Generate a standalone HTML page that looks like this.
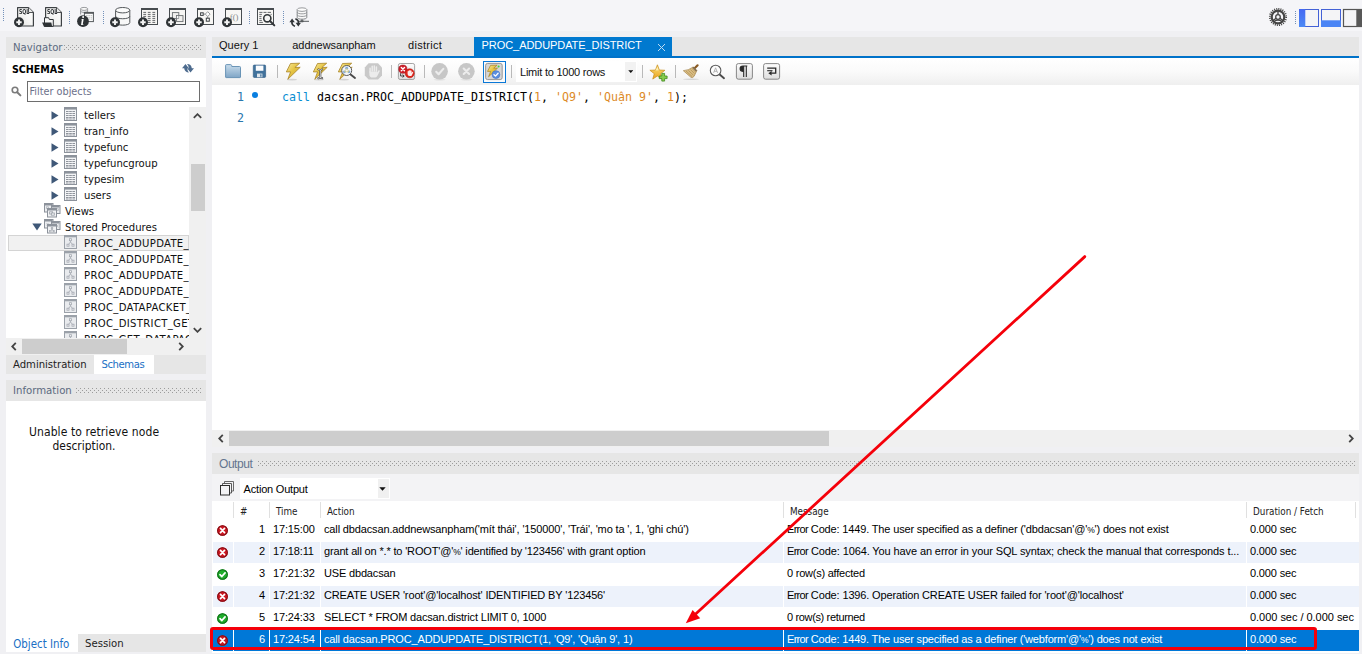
<!DOCTYPE html>
<html><head><meta charset="utf-8"><title>MySQL Workbench</title>
<style>
*{box-sizing:border-box;margin:0;padding:0}
html,body{width:1362px;height:654px;overflow:hidden;background:#f0f0f3;}
body{position:relative;font-family:"DejaVu Sans Condensed","DejaVu Sans","Liberation Sans",sans-serif;font-size:11px;color:#000}
.abs,.abs *{position:absolute}
.t{white-space:nowrap;line-height:14px;height:14px}
.ui{font-family:"DejaVu Sans Condensed","DejaVu Sans","Liberation Sans",sans-serif;font-size:11px}
.ms{font-family:"Liberation Sans",sans-serif;font-size:11px}
.mono{font-family:"DejaVu Sans Mono","Liberation Mono",monospace}
#topbar{left:0;top:0;width:1362px;height:31px;background:#f5f5f8}
.tr{font-size:11.2px;color:#111;margin-top:0.8px}
.pr{letter-spacing:0.33px}
.gr span{position:static}
.er{letter-spacing:-0.7px}
.pc{font-size:8.5px}
.gh{font-size:9.8px;color:#222;margin-top:0.6px}
.gr{font-size:11px;letter-spacing:-0.15px}
.code{font-size:11.63px;letter-spacing:0;color:#000;line-height:16px;height:16px}
.code span{position:static}
.kw{color:#0a8ed2}
.nm{color:#dd8a1f}
.ln{font-size:11.63px;color:#2b78ad;line-height:16px;height:16px}
.hdr{background:#e6e6e6;color:#5c6a80}
.dots{height:5px;background:repeating-linear-gradient(90deg,#9c9c9c 0 1px,transparent 1px 4px) 0 0/100% 1px no-repeat,repeating-linear-gradient(90deg,#9c9c9c 0 1px,transparent 1px 4px) 2px 2px/100% 1px no-repeat,repeating-linear-gradient(90deg,#9c9c9c 0 1px,transparent 1px 4px) 0 4px/100% 1px no-repeat}
</style></head><body>
<svg width="0" height="0" style="position:absolute"><defs>
<symbol id="i-table" viewBox="0 0 13 14"><rect x="0.5" y="0.5" width="12" height="13" fill="#f3f4f6" stroke="#8c929b"/><rect x="1" y="1" width="11" height="1.6" fill="#8c929b"/><path d="M2 4.500h2.600M5.200 4.500h2.600M8.400 4.500h2.600M2 6.500h2.600M5.200 6.500h2.600M8.400 6.500h2.600M2 8.500h2.600M5.200 8.500h2.600M8.400 8.500h2.600M2 10.500h2.600M5.200 10.500h2.600M8.400 10.500h2.600M2 12h2.600M5.200 12h2.600M8.400 12h2.600" stroke="#8f949c" stroke-width="1"/></symbol>
<symbol id="i-proc" viewBox="0 0 13 14"><rect x="0.5" y="0.5" width="12" height="13" fill="#e9ebee" stroke="#9ba1a9"/><rect x="1" y="1" width="11" height="1.300" fill="#9ba1a9"/><path d="M6.500 5.500V7L4 10M6.500 7L9 10" stroke="#a9aeb5" fill="none" stroke-width="0.9"/><rect x="5.500" y="3.700" width="2" height="2" fill="#f6f7f8" stroke="#a3a8b0" stroke-width="0.8"/><rect x="3" y="9.200" width="2" height="2" fill="#f6f7f8" stroke="#a3a8b0" stroke-width="0.8"/><rect x="8" y="9.200" width="2" height="2" fill="#f6f7f8" stroke="#a3a8b0" stroke-width="0.8"/></symbol>
<symbol id="i-views" viewBox="0 0 17 15"><rect x="0.5" y="0.5" width="8.500" height="8.500" fill="#eceef1" stroke="#8c929b"/><rect x="1" y="1" width="7.500" height="1.500" fill="#8c929b"/><rect x="2.300" y="3.800" width="2" height="1.600" fill="none" stroke="#a9aeb5" stroke-width="0.7"/><rect x="7.500" y="2.500" width="8.500" height="8" fill="#eceef1" stroke="#8c929b"/><rect x="8" y="3" width="7.500" height="1.500" fill="#8c929b"/><rect x="12.300" y="5.800" width="2" height="1.600" fill="none" stroke="#a9aeb5" stroke-width="0.7"/><rect x="3.500" y="5.500" width="9" height="8.500" fill="#f1f2f4" stroke="#8c929b"/><rect x="4" y="6" width="8" height="1.500" fill="#8c929b"/><rect x="5.600" y="8.800" width="3" height="2.200" fill="none" stroke="#9aa0a8" stroke-width="0.8"/><rect x="7.300" y="10" width="3" height="2.200" fill="#f1f2f4" stroke="#9aa0a8" stroke-width="0.8"/></symbol>
<symbol id="i-procs" viewBox="0 0 17 15"><rect x="0.5" y="0.5" width="8.500" height="8.500" fill="#eceef1" stroke="#8c929b"/><rect x="1" y="1" width="7.500" height="1.500" fill="#8c929b"/><path d="M2.500 4l2 2.500M4.500 4l-2 2.500" stroke="#b4b9bf" stroke-width="0.7"/><rect x="7.500" y="2.500" width="8.500" height="8" fill="#eceef1" stroke="#8c929b"/><rect x="8" y="3" width="7.500" height="1.500" fill="#8c929b"/><path d="M12.500 5.500l2 3M14.500 5.500l-2 3" stroke="#b4b9bf" stroke-width="0.7"/><rect x="3.500" y="5.500" width="9" height="8.500" fill="#f1f2f4" stroke="#8c929b"/><rect x="4" y="6" width="8" height="1.500" fill="#8c929b"/><path d="M8 8.500V10L6.300 12.300M8 10L9.700 12.300" stroke="#a3a8b0" fill="none" stroke-width="0.8"/><rect x="7.200" y="8.300" width="1.600" height="1.400" fill="#fff" stroke="#a3a8b0" stroke-width="0.6"/><rect x="5.600" y="11.400" width="1.500" height="1.400" fill="#fff" stroke="#a3a8b0" stroke-width="0.6"/><rect x="9" y="11.400" width="1.500" height="1.400" fill="#fff" stroke="#a3a8b0" stroke-width="0.6"/></symbol>
<symbol id="i-err" viewBox="0 0 12 12"><circle cx="6" cy="6" r="5.8" fill="#cf1722"/><circle cx="6" cy="6" r="5.3" fill="none" stroke="#7d0c12" stroke-width="1.1"/><path d="M3.8 3.8L8.2 8.2M8.2 3.8L3.8 8.2" stroke="#fff" stroke-width="1.9" stroke-linecap="round"/></symbol>
<symbol id="i-ok" viewBox="0 0 12 12"><circle cx="6" cy="6" r="5.8" fill="#1fad2b"/><circle cx="6" cy="6" r="5.3" fill="none" stroke="#0f6c17" stroke-width="1.1"/><path d="M3.3 6.2L5.3 8.2L8.8 4.2" stroke="#fff" stroke-width="1.9" fill="none" stroke-linecap="round" stroke-linejoin="round"/></symbol>
</defs></svg>
<div class="abs" id="topbar">
<svg id="tbicons" style="left:0;top:0;opacity:0.999" width="330" height="31" viewBox="0 0 330 31">
  <defs>
    <g id="plus"><circle r="5" fill="#2f3336"/><path d="M-2.7 0H2.7M0 -2.7V2.7" stroke="#f4f4f4" stroke-width="1.9"/></g>
    <linearGradient id="docg" x1="1" y1="0" x2="0" y2="1"><stop offset="0" stop-color="#fff"/><stop offset="0.5" stop-color="#f6f6f5"/><stop offset="1" stop-color="#e0e0de"/></linearGradient>
    <g id="win"><rect x="0.500" y="0.500" width="16" height="16" fill="#f7f6f4" stroke="#474c50" stroke-width="1"/><rect x="0" y="0" width="17" height="2" fill="#474c50"/></g>
  </defs>
  <g fill="#7391ba">
    <g id="vdots"><rect x="3" y="8" width="1" height="1"/><rect x="3" y="10" width="1" height="1"/><rect x="3" y="12" width="1" height="1"/><rect x="3" y="14" width="1" height="1"/><rect x="3" y="16" width="1" height="1"/><rect x="3" y="18" width="1" height="1"/><rect x="3" y="20" width="1" height="1"/></g>
    <use href="#vdots" x="66" y="3"/><use href="#vdots" x="100" y="3"/><use href="#vdots" x="246" y="3"/><use href="#vdots" x="280" y="3"/>
  </g>
  <!-- new sql -->
  <g transform="translate(17,7)">
    <path d="M0.6 0.6H11.5L16.4 5.5V19H0.6Z" fill="url(#docg)" stroke="#3d4144" stroke-width="1.2" stroke-linejoin="round"/>
    <path d="M11.5 0.6V5.5H16.4" fill="#e9e9e8" stroke="#3d4144" stroke-width="0.9"/>
    <text x="1.9" y="7.300" font-family="'DejaVu Sans Condensed','Liberation Sans',sans-serif" font-weight="bold" font-size="6.800" fill="#2f3336" textLength="10.400" lengthAdjust="spacingAndGlyphs">SQL</text>
    <use href="#plus" x="2" y="15.2"/>
  </g>
  <!-- open sql -->
  <g transform="translate(45,7)">
    <path d="M0.6 0.6H11.5L16.4 5.5V19H0.6Z" fill="url(#docg)" stroke="#3d4144" stroke-width="1.2" stroke-linejoin="round"/>
    <path d="M11.5 0.6V5.5H16.4" fill="#e9e9e8" stroke="#3d4144" stroke-width="0.9"/>
    <text x="1.9" y="7.300" font-family="'DejaVu Sans Condensed','Liberation Sans',sans-serif" font-weight="bold" font-size="6.800" fill="#2f3336" textLength="10.400" lengthAdjust="spacingAndGlyphs">SQL</text>
    <path d="M-0.500 19.400V10.700H3.600L4.400 12.500H8.300V19.400Z" fill="#f6f6f6" stroke="#2f3336" stroke-width="1"/>
    <path d="M-2.900 15.500H6.300L7.200 19.700H-1Z" fill="#2f3336"/>
  </g>
  <!-- info -->
  <g transform="translate(77,7)">
    <path d="M3.6 1.8V7.5M10.6 1.8V5" stroke="#8d9093" stroke-width="0.9" fill="none"/>
    <ellipse cx="7.1" cy="1.9" rx="3.6" ry="1.5" fill="#fafafa" stroke="#8d9093" stroke-width="0.9"/>
    <path d="M3.6 4.3C4.5 5.8 9.7 5.8 10.6 4.3" stroke="#8d9093" stroke-width="0.9" fill="none"/>
    <rect x="7.4" y="5.4" width="9" height="9.2" fill="#fbfbfb" stroke="#55595c" stroke-width="1"/>
    <rect x="7" y="5" width="9.9" height="1.8" fill="#55595c"/>
    <path d="M9 8.5h6M9 10.3h6M9 12.1h6" stroke="#b9babb" stroke-width="0.8"/>
    <path d="M11 7.5v6.5M13.4 7.5v6.5" stroke="#fbfbfb" stroke-width="0.7"/>
    <circle cx="6" cy="14.2" r="5.9" fill="#2f3336"/>
    <text x="3.700" y="18.300" font-family="'Liberation Serif',serif" font-weight="bold" font-style="italic" font-size="12" fill="#fff">i</text>
  </g>
  <!-- new schema -->
  <g transform="translate(113,7)">
    <path d="M2.600 3.200V15.600C2.600 19 16.800 19 16.800 15.600V3.200" fill="#f8f8f8" stroke="#54585b" stroke-width="1"/>
    <ellipse cx="9.700" cy="3.200" rx="7.100" ry="2.700" fill="#fcfcfc" stroke="#54585b" stroke-width="1"/>
    <path d="M2.600 9.200C2.600 12.600 16.800 12.600 16.800 9.200" fill="none" stroke="#54585b" stroke-width="1"/>
    <use href="#plus" x="2" y="15.2"/>
  </g>
  <!-- new table -->
  <g transform="translate(141,8)">
    <use href="#win"/>
    <path d="M2.300 4.400h2.800M6.800 4.400h2.800M11.400 4.400h2.800M2.300 6.400h2.800M6.800 6.400h2.800M11.400 6.400h2.800M2.300 8.400h2.800M6.800 8.400h2.800M11.400 8.400h2.800M6.800 10.400h2.800M11.400 10.400h2.800M6.800 12.400h2.800M11.400 12.400h2.800M6.800 14.400h2.800M11.400 14.400h2.800" stroke="#54585b" stroke-width="0.9"/>
    <use href="#plus" x="2" y="14.200"/>
  </g>
  <!-- new view -->
  <g transform="translate(169,8)">
    <use href="#win"/>
    <rect x="3.4" y="4.6" width="6.4" height="6" fill="#f1f0ee" stroke="#6a6e71" stroke-width="0.9"/>
    <rect x="7.6" y="7.6" width="6.4" height="6" fill="#f1f0ee" stroke="#6a6e71" stroke-width="0.9"/>
    <rect x="7.6" y="7.6" width="2.2" height="3" fill="#fdfdfd" stroke="#6a6e71" stroke-width="0.6"/>
    <use href="#plus" x="2" y="14.200"/>
  </g>
  <!-- new procedure -->
  <g transform="translate(197,8)">
    <use href="#win"/>
    <rect x="3.600" y="4.800" width="2.600" height="2.600" fill="#fff" stroke="#3d4144" stroke-width="1"/>
    <path d="M6.400 6.100H8.300M10.700 8.500V10" stroke="#6a6e71" stroke-width="0.8"/>
    <path d="M10.700 3.700L13.100 6.100L10.700 8.500L8.300 6.100Z" fill="#fff" stroke="#7d8184" stroke-width="0.8"/>
    <rect x="9.300" y="10.200" width="3" height="3" fill="#fff" stroke="#3d4144" stroke-width="1"/>
    <use href="#plus" x="2" y="14.200"/>
  </g>
  <!-- new function -->
  <g transform="translate(225,8)">
    <use href="#win"/>
    <text x="4.800" y="12.300" font-family="'Liberation Serif',serif" font-size="9" fill="#85888b" textLength="8.600" lengthAdjust="spacingAndGlyphs">f()</text>
    <use href="#plus" x="2" y="14.200"/>
  </g>
  <!-- search table -->
  <g transform="translate(257,8)">
    <use href="#win"/>
    <path d="M2.300 4.400h3.200M6.500 4.400h3M10.600 4.400h3.400M2.300 6.400h2.600M2.300 8.400h2.200M2.300 10.400h2.200M2.300 12.400h2.600M2.300 14.400h3.600M13.600 6.400h1" stroke="#54585b" stroke-width="0.9"/>
    <circle cx="10.300" cy="10.300" r="3.600" fill="#f4f4f3" stroke="#33373a" stroke-width="1.600"/>
    <path d="M13 13L17.300 17.400" stroke="#33373a" stroke-width="2" stroke-linecap="round"/>
  </g>
  <!-- reconnect -->
  <g transform="translate(290,7)">
    <path d="M7.2 2.6V10.4C7.2 12.8 16.8 12.8 16.8 10.4V2.6" fill="#fafafa" stroke="#777b7e" stroke-width="0.9"/>
    <ellipse cx="12" cy="2.6" rx="4.8" ry="1.8" fill="#fdfdfd" stroke="#8d9093" stroke-width="0.9"/>
    <path d="M7.2 5.2C7.2 7.4 16.8 7.4 16.8 5.2M7.2 7.8C7.2 10 16.8 10 16.8 7.8" fill="none" stroke="#8d9093" stroke-width="0.9"/>
    <path d="M12 12.4V14.3M8.6 14.3H19" stroke="#55595c" stroke-width="1"/>
    <rect x="10.3" y="13.2" width="3.4" height="2" rx="0.8" fill="#55595c"/>
    <path d="M5 19.300Q1.400 18 2 14.500" stroke="#2f3336" stroke-width="1.700" fill="none"/><path d="M2.100 11.400L-0.600 15.300H4.800Z" fill="#2f3336"/><path d="M5.400 11.700Q9 13 8.400 16.500" stroke="#2f3336" stroke-width="1.700" fill="none"/><path d="M8.300 19.600L11 15.700H5.600Z" fill="#2f3336"/>
  </g>
</svg>
<svg id="tricons" style="left:1262px;top:0" width="100" height="31" viewBox="1262 0 100 31">
  <g fill="#7391ba"><rect x="1295" y="11" width="1" height="1"/><rect x="1295" y="13" width="1" height="1"/><rect x="1295" y="15" width="1" height="1"/><rect x="1295" y="17" width="1" height="1"/><rect x="1295" y="19" width="1" height="1"/><rect x="1295" y="21" width="1" height="1"/><rect x="1295" y="23" width="1" height="1"/></g>
  <circle cx="1278" cy="17" r="8.2" fill="none" stroke="#454545" stroke-width="1.7" stroke-dasharray="1.05 1.1"/>
  <circle cx="1278" cy="17" r="6.3" fill="none" stroke="#454545" stroke-width="2.2"/>
  <circle cx="1278" cy="17" r="2.3" fill="#f5f5f8" stroke="#454545" stroke-width="1.3"/>
  <path d="M1278 14.6V11M1276 18.300L1272.900 20.800M1280 18.300L1283.100 20.800" stroke="#454545" stroke-width="1.4"/>
  <path d="M1274 21.500Q1278 18.800 1282 21.500" stroke="#454545" stroke-width="1.2" fill="none"/>
  <defs><linearGradient id="gblue" x1="0" y1="0" x2="0" y2="1"><stop offset="0" stop-color="#4468f2"/><stop offset="1" stop-color="#4d8af5"/></linearGradient></defs>
  <rect x="1299.500" y="9.500" width="19" height="17" fill="#f4f4f6" stroke="#4361d6" stroke-width="1"/>
  <rect x="1299" y="9" width="6.300" height="18" fill="url(#gblue)"/>
  <rect x="1321.500" y="9.500" width="19" height="17" fill="#f4f4f6" stroke="#4361d6" stroke-width="1"/>
  <rect x="1321" y="20.300" width="20" height="6.700" fill="#4a84f5"/>
  <rect x="1343.500" y="9.500" width="22" height="17" fill="#f4f4f6" stroke="#555" stroke-width="1.2"/>
  <rect x="1356.300" y="9" width="8" height="18" fill="#585858"/>
</svg>
</div>

<!-- LEFT PANEL -->
<div class="abs" id="left" style="left:6px;top:37px;width:200px;height:617px">
  <div class="hdr" style="left:0;top:0;width:200px;height:21px">
    <div class="t ui" style="left:7px;top:3.600px;font-size:11.25px">Navigator</div>
    <div class="dots" style="left:58px;top:8px;width:137px"></div>
  </div>
  <div id="navwhite" style="left:0;top:21px;width:200px;height:297px;background:#fff"></div>
  <div class="t ui" style="left:6px;top:25px;font-weight:bold;font-size:10.6px">SCHEMAS</div>
  <div style="left:21px;top:44px;width:173px;height:21px;border:1px solid #6e6e6e;background:#fff"></div>
  <div class="t ui" style="left:23.5px;top:47.700px;color:#6c708a;font-size:10.8px">Filter objects</div>
  <div id="tree" style="left:0;top:70px;width:183px;height:231px;overflow:hidden">
    <div style="left:2px;top:128px;width:181px;height:16px;background:#f1f1f1;border:1px solid #d4d4d4"></div>
    <svg style="left:45px;top:4px" width="8" height="9" viewBox="0 0 8 9"><path d="M0.5 0.3L7.5 4.5L0.5 8.7Z" fill="#3f5878"/></svg>
    <svg style="left:58px;top:0px" width="13" height="14"><use href="#i-table"/></svg>
    <div class="t ui tr" style="left:78px;top:1px">tellers</div>
    <svg style="left:45px;top:20px" width="8" height="9" viewBox="0 0 8 9"><path d="M0.5 0.3L7.5 4.5L0.5 8.7Z" fill="#3f5878"/></svg>
    <svg style="left:58px;top:16px" width="13" height="14"><use href="#i-table"/></svg>
    <div class="t ui tr" style="left:78px;top:17px">tran_info</div>
    <svg style="left:45px;top:36px" width="8" height="9" viewBox="0 0 8 9"><path d="M0.5 0.3L7.5 4.5L0.5 8.7Z" fill="#3f5878"/></svg>
    <svg style="left:58px;top:32px" width="13" height="14"><use href="#i-table"/></svg>
    <div class="t ui tr" style="left:78px;top:33px">typefunc</div>
    <svg style="left:45px;top:52px" width="8" height="9" viewBox="0 0 8 9"><path d="M0.5 0.3L7.5 4.5L0.5 8.7Z" fill="#3f5878"/></svg>
    <svg style="left:58px;top:48px" width="13" height="14"><use href="#i-table"/></svg>
    <div class="t ui tr" style="left:78px;top:49px">typefuncgroup</div>
    <svg style="left:45px;top:68px" width="8" height="9" viewBox="0 0 8 9"><path d="M0.5 0.3L7.5 4.5L0.5 8.7Z" fill="#3f5878"/></svg>
    <svg style="left:58px;top:64px" width="13" height="14"><use href="#i-table"/></svg>
    <div class="t ui tr" style="left:78px;top:65px">typesim</div>
    <svg style="left:45px;top:84px" width="8" height="9" viewBox="0 0 8 9"><path d="M0.5 0.3L7.5 4.5L0.5 8.7Z" fill="#3f5878"/></svg>
    <svg style="left:58px;top:80px" width="13" height="14"><use href="#i-table"/></svg>
    <div class="t ui tr" style="left:78px;top:81px">users</div>
    <svg style="left:38px;top:96px" width="17" height="15"><use href="#i-views"/></svg>
    <div class="t ui tr" style="left:59px;top:97px">Views</div>
    <svg style="left:26px;top:116px" width="10" height="8" viewBox="0 0 10 8"><path d="M0.3 0.5L9.7 0.5L5 7.6Z" fill="#3f5878"/></svg>
    <svg style="left:38px;top:112px" width="17" height="15"><use href="#i-procs"/></svg>
    <div class="t ui tr" style="left:59px;top:113px">Stored Procedures</div>
    <svg style="left:58px;top:128px" width="13" height="14"><use href="#i-proc"/></svg>
    <div class="t ui tr pr" style="left:78px;top:129px">PROC_ADDUPDATE_DISTRICT</div>
    <svg style="left:58px;top:144px" width="13" height="14"><use href="#i-proc"/></svg>
    <div class="t ui tr pr" style="left:78px;top:145px">PROC_ADDUPDATE_NEWS</div>
    <svg style="left:58px;top:160px" width="13" height="14"><use href="#i-proc"/></svg>
    <div class="t ui tr pr" style="left:78px;top:161px">PROC_ADDUPDATE_SANPHAM</div>
    <svg style="left:58px;top:176px" width="13" height="14"><use href="#i-proc"/></svg>
    <div class="t ui tr pr" style="left:78px;top:177px">PROC_ADDUPDATE_SLIDE</div>
    <svg style="left:58px;top:192px" width="13" height="14"><use href="#i-proc"/></svg>
    <div class="t ui tr pr" style="left:78px;top:193px">PROC_DATAPACKET_GET</div>
    <svg style="left:58px;top:208px" width="13" height="14"><use href="#i-proc"/></svg>
    <div class="t ui tr pr" style="left:78px;top:209px">PROC_DISTRICT_GET</div>
    <svg style="left:58px;top:224px" width="13" height="14"><use href="#i-proc"/></svg>
    <div class="t ui tr pr" style="left:78px;top:225px">PROC_GET_DATAPACKET</div>
  </div>
  <!-- v scrollbar -->
  <div style="left:183px;top:70px;width:17px;height:231px;background:#f0f0f0"></div>
  <div style="left:185px;top:127px;width:14px;height:47px;background:#cdcdcd"></div>
  <!-- h scrollbar -->
  <div style="left:0;top:301px;width:200px;height:17px;background:#f0f0f0"></div>
  <div style="left:16px;top:302px;width:105px;height:15px;background:#cdcdcd"></div>
  <svg style="left:187px;top:76px" width="9" height="6" viewBox="0 0 9 6"><path d="M0.800 4.800L4.500 1.200L8.200 4.800" stroke="#444" stroke-width="1.800" fill="none"/></svg>
  <svg style="left:187px;top:290px" width="9" height="6" viewBox="0 0 9 6"><path d="M0.800 1.200L4.500 4.800L8.200 1.200" stroke="#444" stroke-width="1.800" fill="none"/></svg>
  <svg style="left:5px;top:305px" width="6" height="9" viewBox="0 0 6 9"><path d="M4.800 0.800L1.200 4.500L4.800 8.200" stroke="#444" stroke-width="1.800" fill="none"/></svg>
  <svg style="left:172px;top:305px" width="6" height="9" viewBox="0 0 6 9"><path d="M1.200 0.800L4.800 4.500L1.200 8.200" stroke="#444" stroke-width="1.800" fill="none"/></svg>
  <svg style="left:5px;top:49px" width="11" height="11" viewBox="0 0 11 11"><circle cx="4" cy="4" r="2.800" fill="none" stroke="#7b7b7b" stroke-width="1.600"/><path d="M6.200 6.200L9.400 9.400" stroke="#7b7b7b" stroke-width="2" stroke-linecap="round"/></svg>
  <svg style="left:176px;top:26.500px" width="12" height="9" viewBox="0 0 12 9"><g fill="#4d6b8e"><path id="rfa" d="M3.500 0L6.800 4.200H5.300Q5.300 6.800 7 8.400Q2.600 8.300 2.200 4.200H0Z"/><use href="#rfa" transform="rotate(180 6 4.200)"/></g></svg>
  <!-- tabs -->
  <div style="left:0;top:318px;width:200px;height:19px;background:#e6e6e6"></div>
  <div style="left:88px;top:318px;width:60px;height:19px;background:#fff"></div>
  <div class="t ui" style="left:7px;top:320.800px;color:#222;font-size:11.2px">Administration</div>
  <div class="t ui" style="left:95.4px;top:320.800px;color:#1a6fc4;font-size:11.2px;letter-spacing:-0.4px">Schemas</div>
  <!-- information -->
  <div class="hdr" style="left:0;top:343px;width:200px;height:21px">
    <div class="t ui" style="left:7px;top:3.800px;font-size:11.3px">Information</div>
    <div class="dots" style="left:70px;top:8px;width:125px"></div>
  </div>
  <div style="left:0;top:364px;width:200px;height:233px;background:#fff"></div>
  <div class="t ui" style="left:23px;top:388px;font-size:12px;letter-spacing:0.09px;color:#111">Unable to retrieve node</div>
  <div class="t ui" style="left:46.500px;top:402px;font-size:11.9px;color:#111">description.</div>
  <div style="left:0;top:597px;width:200px;height:18.300px;background:#e6e6e6"></div>
  <div style="left:0;top:597px;width:72px;height:18.300px;background:#fff"></div>
  <div class="t ui" style="left:7.300px;top:599.600px;color:#1a6fc4;font-size:11.4px">Object Info</div>
  <div class="t ui" style="left:79px;top:599.600px;color:#222;font-size:11.25px">Session</div>
</div>

<!-- MAIN PANEL -->
<div class="abs" id="main" style="left:212px;top:37px;width:1147px;height:617px">
  <div id="tabs" style="left:0;top:0;width:1147px;height:19px;background:#e6e6e6"></div>
  <div style="left:261.700px;top:0;width:198.300px;height:19px;background:#0079cf"></div>
  <svg style="left:445px;top:6px" width="9" height="9" viewBox="0 0 9 9"><path d="M1 1L8 8M8 1L1 8" stroke="#bcdcf3" stroke-width="1"/></svg>
  <div style="left:0;top:19px;width:1147px;height:2px;background:#0072c9"></div>
  <div class="t ms" style="left:7px;top:1.300px;font-size:11px;letter-spacing:0.05px;color:#111">Query 1</div>
  <div class="t ms" style="left:80.3px;top:1.300px;font-size:11px;letter-spacing:-0.04px;color:#111">addnewsanpham</div>
  <div class="t ms" style="left:196px;top:1.300px;font-size:11px;letter-spacing:0.3px;color:#111">district</div>
  <div class="t ms" style="left:269.600px;top:1.300px;font-size:11px;letter-spacing:-0.07px;color:#fff">PROC_ADDUPDATE_DISTRICT</div>
  <div id="edtb" style="left:0;top:21px;width:1147px;height:27px;background:linear-gradient(#fff,#fafafa 50%,#efefef)"></div>
  <svg id="edicons" style="left:0;top:21px" width="600" height="27" viewBox="212 58 600 27">
  <defs>
    <linearGradient id="gfold" x1="0" y1="0" x2="0" y2="1"><stop offset="0" stop-color="#c9ddec"/><stop offset="1" stop-color="#7fa5c6"/></linearGradient>
    <linearGradient id="gbolt" x1="0" y1="0" x2="1" y2="1"><stop offset="0" stop-color="#f7e9a0"/><stop offset="0.45" stop-color="#e6c544"/><stop offset="1" stop-color="#c9a22e"/></linearGradient>
    <linearGradient id="gbtn" x1="0" y1="0" x2="0" y2="1"><stop offset="0" stop-color="#fdfdfd"/><stop offset="1" stop-color="#dedede"/></linearGradient>
    <linearGradient id="gstar" x1="0" y1="0" x2="0" y2="1"><stop offset="0" stop-color="#fbe27a"/><stop offset="1" stop-color="#e9a21c"/></linearGradient>
    <path id="bolt" d="M4.5 0.5L13.7 0.2L8.9 4.5L14.2 4.3L1.8 16.3L4.6 8.9L0.3 8.9Z"/>
    <g id="vsep"><rect x="-0.5" y="65" width="1" height="13" fill="#b9b9b9"/></g>
  </defs>
  <!-- open -->
  <path d="M225.6 77.1V65.4Q225.6 64.6 226.4 64.6H230.6Q231.4 64.6 231.6 65.4L231.8 66.5H239.6Q240.5 66.5 240.5 67.4V77.1Q240.5 77.6 239.9 77.6H226.2Q225.6 77.6 225.6 77.1Z" fill="url(#gfold)" stroke="#5d8bb0" stroke-width="0.9"/>
  <!-- save -->
  <rect x="253.3" y="65.1" width="12.3" height="12.3" rx="0.8" fill="#41729c" stroke="#35618a" stroke-width="0.7"/>
  <rect x="255.8" y="65.6" width="7.6" height="5.2" fill="#fafcfe"/>
  <rect x="257" y="73.6" width="5.4" height="3.6" fill="#dfe6ec"/>
  <rect x="260.2" y="74.3" width="1.3" height="2.4" fill="#41729c"/>
  <use href="#vsep" x="277.5"/>
  <!-- execute -->
  <ellipse cx="292" cy="79.6" rx="5" ry="0.9" fill="#000" opacity="0.13"/>
  <use href="#bolt" x="286" y="63" fill="url(#gbolt)" stroke="#a98528" stroke-width="0.8" stroke-linejoin="round"/>
  <!-- execute current -->
  <ellipse cx="319" cy="79.6" rx="5" ry="0.9" fill="#000" opacity="0.13"/>
  <use href="#bolt" x="313" y="63" fill="url(#gbolt)" stroke="#a98528" stroke-width="0.8" stroke-linejoin="round"/>
  <path d="M318.4 69.4Q319.6 69.6 320.3 70.2Q321 69.6 322.2 69.4M320.3 70.2V77.4M318.4 78.3Q319.6 78.1 320.3 77.4Q321 78.1 322.2 78.3" stroke="#2a2a2a" stroke-width="1.900" fill="none" stroke-linecap="round"/>
  <path d="M318.4 69.4Q319.6 69.6 320.3 70.2Q321 69.6 322.2 69.4M320.3 70.2V77.4M318.4 78.3Q319.6 78.1 320.3 77.4Q321 78.1 322.2 78.3" stroke="#f6f6f6" stroke-width="0.800" fill="none" stroke-linecap="round"/>
  <!-- explain -->
  <ellipse cx="344" cy="79.6" rx="5" ry="0.9" fill="#000" opacity="0.13"/>
  <use href="#bolt" x="338" y="63" fill="url(#gbolt)" stroke="#a98528" stroke-width="0.8" stroke-linejoin="round"/>
  <path d="M350.600 74.400L355 78" stroke="#4a4a4a" stroke-width="1.900" stroke-linecap="round"/>
  <circle cx="346.700" cy="70.500" r="5" fill="#f3f6f9" stroke="#5c5c5c" stroke-width="1"/>
  <circle cx="346.7" cy="68.2" r="1.4" fill="#7aa7e0"/><circle cx="344.4" cy="71.8" r="1.4" fill="#7aa7e0"/><circle cx="349" cy="71.8" r="1.4" fill="#7aa7e0"/>
  <path d="M346.7 68.2L344.4 71.8H349Z" fill="none" stroke="#e4cf6a" stroke-width="0.7"/>
  <!-- stop -->
  <path d="M368.6 63.2H378L382 67.4V75.4L378 79.6H368.6L364.8 75.4V67.4Z" fill="#c9c9c9"/>
  <path d="M370.100 72V68.300M372.200 71V66.300M374.300 71V65.900M376.400 71V66.900" stroke="#ececec" stroke-width="1.500" stroke-linecap="round" fill="none"/><path d="M369.350 71.500H377.150V72.600L378.400 70.600Q378.900 70 379.500 70.400Q380 70.900 379.600 71.600L377.300 76Q376.600 77.600 374.800 77.600H372.800Q369.350 77.600 369.350 74.200Z" fill="#ececec"/>
  <use href="#vsep" x="391.5"/>
  <!-- toggle stop on error -->
  <rect x="398.4" y="63.5" width="16.2" height="16" rx="1.8" fill="url(#gbtn)" stroke="#9a9a9a" stroke-width="0.9"/>
  <path d="M400.6 73.2V76H404M402.6 74.6L404.2 76L402.600 77.4" fill="none" stroke="#333" stroke-width="0.9"/>
  <circle cx="402.9" cy="69.2" r="4.1" fill="#d21f2b" stroke="#9c1018" stroke-width="0.6"/>
  <path d="M401.300 67.600L404.500 70.800M404.500 67.600L401.300 70.800" stroke="#fff" stroke-width="1.400" stroke-linecap="round"/>
  <circle cx="409.7" cy="73.3" r="4.5" fill="#e0261c" stroke="#b3170f" stroke-width="0.6"/>
  <path d="M407.600 74V71.6Q407.600 71.100 408.1 71.100Q408.6 71.100 408.6 71.6V70.8Q408.6 70.3 409.1 70.3Q409.600 70.3 409.600 70.8V70.5Q409.600 70 410.1 70Q410.600 70 410.600 70.5V70.9Q410.600 70.4 411.100 70.4Q411.600 70.4 411.600 70.9V73L412.300 72Q412.700 71.600 413.100 71.900Q413.400 72.200 413.100 72.700L412 74.900Q411.500 76.100 410.300 76.100H409.500Q407.600 76.100 407.600 74Z" fill="#fbeceb"/>
  <use href="#vsep" x="424.5"/>
  <!-- commit -->
  <ellipse cx="439.600" cy="79.8" rx="6" ry="0.8" fill="#000" opacity="0.08"/>
  <circle cx="439.600" cy="71.3" r="8.3" fill="#c7c7c7"/>
  <path d="M436.200 71.800L438.600 74.200L443.300 68.900" stroke="#ececec" stroke-width="2.100" fill="none" stroke-linecap="round" stroke-linejoin="round"/>
  <!-- rollback -->
  <ellipse cx="466.400" cy="79.8" rx="6" ry="0.8" fill="#000" opacity="0.08"/>
  <circle cx="466.400" cy="71.3" r="8.3" fill="#c7c7c7"/>
  <path d="M463.700 68.600L469.100 74M469.100 68.600L463.700 74" stroke="#ececec" stroke-width="2.100" fill="none" stroke-linecap="round"/>
  <!-- autocommit -->
  <rect x="483.500" y="61.5" width="22" height="21" fill="#fbfbfb" stroke="#0a78d7" stroke-width="1"/>
  <rect x="485.600" y="63.4" width="16.600" height="16.2" rx="2" fill="#d6d6d6" stroke="#8c8c8c" stroke-width="0.9"/>
  <g transform="translate(487.3,65) scale(0.72)"><use href="#bolt" fill="url(#gbolt)" stroke="#a98528" stroke-width="1" stroke-linejoin="round"/></g>
  <circle cx="498.600" cy="66.600" r="1" fill="#3fd13a"/>
  <circle cx="496" cy="74.600" r="3.9" fill="#5b8fe0" stroke="#3f73c7" stroke-width="0.6"/>
  <path d="M494 74.700L495.500 76.100L498.100 73.200" stroke="#fff" stroke-width="1.3" fill="none" stroke-linecap="round" stroke-linejoin="round"/>
  <use href="#vsep" x="511.500"/>
  <use href="#vsep" x="642.500"/>
  <!-- star -->
  <path d="M657.40 64.80L659.34 70.03L664.91 70.26L660.54 73.72L662.04 79.09L657.40 76.00L652.76 79.09L654.26 73.72L649.89 70.26L655.46 70.03Z" fill="url(#gstar)" stroke="#c98d18" stroke-width="0.7" stroke-linejoin="round"/><path d="M657.400 66.800L658.700 70.300L655.400 70.600Z" fill="#fff6c8" opacity="0.8"/>
  <path d="M661.800 73.400H664.600V76H667.100V78.600H664.600V81.100H661.800V78.600H659.300V76H661.800Z" fill="#86cc4c" stroke="#3f8a1d" stroke-width="0.8" stroke-linejoin="round"/>
  <use href="#vsep" x="675.500"/>
  <!-- broom -->
  <ellipse cx="691" cy="79.3" rx="8" ry="0.7" fill="#000" opacity="0.12"/>
  <path d="M694.600 68.300L697.600 65.300" stroke="#8a5a22" stroke-width="2.2" stroke-linecap="round"/>
  <path d="M693.300 66.900L696.900 70.500L694.200 76.200Q692.500 78.400 690.900 77.300L683.300 70.700Q688.900 70.200 693.300 66.900Z" fill="#d9bd84" stroke="#9c7a40" stroke-width="0.6" stroke-linejoin="round"/>
  <path d="M686 71L692.200 76.600M688.300 70.400L693.400 75.200M690.400 69.500L694.600 73.500M692 68.500L695.700 72" stroke="#a98648" stroke-width="0.6" fill="none"/>
  <path d="M692.900 67.300L696.500 70.900" stroke="#7d6a52" stroke-width="1.4"/>
  <!-- find -->
  <path d="M719.400 74.300L724 78.200" stroke="#4a4a4a" stroke-width="1.9" stroke-linecap="round"/>
  <circle cx="715.600" cy="70.500" r="5.300" fill="#fcfcfc" stroke="#5a5a5a" stroke-width="1.100"/>
  <path d="M713.600 72.900L715.600 67.800L717.600 72.900M714.300 71.300H716.900" stroke="#a4a4a4" stroke-width="0.8" fill="none"/>
  <!-- pilcrow -->
  <rect x="736.400" y="63.600" width="16" height="15.600" rx="2" fill="url(#gbtn)" stroke="#7a7a7a" stroke-width="0.9"/>
  <path d="M743.700 66V77M746.300 66V77M747.300 66H743Q740.100 66 740.100 68.700Q740.100 71.400 743.700 71.400" stroke="#2a2a2a" stroke-width="1.1" fill="none"/>
  <path d="M743.700 66H743Q740.100 66 740.100 68.700Q740.100 71.400 743.700 71.400Z" fill="#2a2a2a"/>
  <!-- wrap -->
  <rect x="763.600" y="63.600" width="16" height="15.600" rx="2" fill="url(#gbtn)" stroke="#7a7a7a" stroke-width="0.9"/>
  <path d="M767.200 68.200H775.700V73.200H771.200" stroke="#2a2a2a" stroke-width="1.300" fill="none"/>
  <path d="M768.300 73.200L771.600 70.900V75.500Z" fill="#2a2a2a"/>
  <path d="M767.200 70.700H772.500" stroke="#2a2a2a" stroke-width="1.1"/>
</svg>
<div style="left:304px;top:24px;width:121px;height:21px;background:#fff"></div>
<div style="left:413px;top:25px;width:11px;height:19px;background:#f2f2f2"></div>
<svg style="left:415.600px;top:33px" width="5.600" height="3.200" viewBox="0 0 7 4"><path d="M0.300 0.200H6.700L3.500 3.800Z" fill="#111"/></svg>
<div class="t ms" style="left:308px;top:27.500px;font-size:11px;letter-spacing:-0.23px;color:#111">Limit to 1000 rows</div>
  <div id="editor" style="left:0;top:48px;width:1147px;height:345px;background:#fff">
    <div class="t mono ln" style="left:16px;top:4px;width:16px;text-align:right">1</div>
    <div class="t mono ln" style="left:16px;top:25px;width:16px;text-align:right">2</div>
    <div style="left:40px;top:7px;width:6px;height:6px;border-radius:50%;background:#0a7fe0"></div>
    <div class="t mono code" style="left:70px;top:3.600px"><span class="kw">call</span> dacsan.PROC_ADDUPDATE_DISTRICT(<span class="nm">1</span>, <span class="nm">'Q9'</span>, <span class="nm">'Quận 9'</span>, <span class="nm">1</span>);</div>
  </div>
  <div style="left:0;top:393px;width:1147px;height:17px;background:#f0f0f0"></div>
  <div style="left:17px;top:394px;width:600px;height:15px;background:#cdcdcd"></div>
  <svg style="left:6px;top:397px" width="6" height="9" viewBox="0 0 6 9"><path d="M4.800 0.800L1.200 4.500L4.800 8.200" stroke="#444" stroke-width="1.800" fill="none"/></svg>
  <svg style="left:1136px;top:397px" width="6" height="9" viewBox="0 0 6 9"><path d="M1.200 0.800L4.800 4.500L1.200 8.200" stroke="#444" stroke-width="1.800" fill="none"/></svg>
  <!-- output -->
  <div class="hdr" style="left:0;top:416px;width:1147px;height:21px">
    <div class="t ms" style="left:7px;top:3.600px;font-size:12px;letter-spacing:-0.45px;color:#64758f">Output</div>
    <div class="dots" style="left:46px;top:8px;width:1097px"></div>
  </div>
  <div style="left:0;top:437px;width:1147px;height:27px;background:#f3f3f5"></div>
  <div style="left:28px;top:441px;width:150px;height:21px;background:#fff"></div>
  <div style="left:166px;top:442px;width:11px;height:19px;background:#f0f0f0"></div>
  <div class="t ms" style="left:31.600px;top:445px;font-size:11px;letter-spacing:-0.2px">Action Output</div>
  <svg style="left:167px;top:450px" width="7" height="4" viewBox="0 0 7 4"><path d="M0.300 0.200H6.700L3.500 3.800Z" fill="#111"/></svg>
  <svg style="left:8px;top:444px" width="14" height="15" viewBox="0 0 14 15"><path d="M4.500 2.500V0.500H13.500V10H11.500" fill="none" stroke="#5a5a5a" stroke-width="0.9"/><path d="M2.500 4.500V2.500H11.500V12H9.500" fill="none" stroke="#4a4a4a" stroke-width="0.9"/><rect x="0.500" y="4.500" width="9" height="9.500" fill="#f3f3f5" stroke="#2e2e2e" stroke-width="1"/></svg>
  <div id="grid" style="left:0;top:464px;width:1147px;height:151.500px;background:#fff;overflow:hidden">
    <div style="left:0;top:0;width:1147px;height:18px;background:#fff"></div>
    <div style="left:21px;top:1px;width:1px;height:16px;background:#e0e0e0"></div>
    <div style="left:57px;top:1px;width:1px;height:16px;background:#e0e0e0"></div>
    <div style="left:108px;top:1px;width:1px;height:16px;background:#e0e0e0"></div>
    <div style="left:571px;top:1px;width:1px;height:16px;background:#e0e0e0"></div>
    <div style="left:1034px;top:1px;width:1px;height:16px;background:#e0e0e0"></div>
    <div style="left:1143px;top:1px;width:1px;height:16px;background:#e0e0e0"></div>
    <div class="t ui gh" style="left:28px;top:3px">#</div>
    <div class="t ui gh" style="left:64px;top:3px">Time</div>
    <div class="t ui gh" style="left:115px;top:3px">Action</div>
    <div class="t ui gh" style="left:578px;top:3px">Message</div>
    <div class="t ui gh" style="left:1041px;top:3px">Duration / Fetch</div>
    <svg style="left:5px;top:23.8px" width="11" height="11"><use href="#i-err"/></svg>
    <div class="t ms gr" style="left:24px;top:21px;width:29px;text-align:right;color:#000">1</div>
    <div class="t ms gr" style="left:61px;top:21px;color:#000">17:15:00</div>
    <div class="t ms gr" style="letter-spacing:-0.144px;left:112px;top:21px;color:#000">call dbdacsan.addnewsanpham('mít thái', '150000', 'Trái', 'mo ta ', 1, 'ghi chú')</div>
    <div class="t ms gr" style="letter-spacing:-0.155px;left:575px;top:21px;color:#000"><span class="er">Error</span> Code: 1449. The user specified as a definer ('dbdacsan'@'<span class="pc">%</span>') does not exist</div>
    <div class="t ms gr" style="left:1038px;top:21px;color:#000">0.000 sec</div>
    <div style="left:1px;top:41px;width:1146px;height:21px;background:#edf2fb"></div>
    <div style="left:21px;top:40px;width:1px;height:22px;background:#fff"></div>
    <div style="left:57px;top:40px;width:1px;height:22px;background:#fff"></div>
    <div style="left:108px;top:40px;width:1px;height:22px;background:#fff"></div>
    <div style="left:571px;top:40px;width:1px;height:22px;background:#fff"></div>
    <div style="left:1034px;top:40px;width:1px;height:22px;background:#fff"></div>
    <svg style="left:5px;top:45.8px" width="11" height="11"><use href="#i-err"/></svg>
    <div class="t ms gr" style="left:24px;top:43px;width:29px;text-align:right;color:#000">2</div>
    <div class="t ms gr" style="left:61px;top:43px;color:#000">17:18:11</div>
    <div class="t ms gr" style="letter-spacing:-0.161px;left:112px;top:43px;color:#000">grant all on *.* to 'ROOT'@'<span class="pc">%</span>' identified by '123456' with grant option</div>
    <div class="t ms gr" style="letter-spacing:-0.110px;left:575px;top:43px;color:#000"><span class="er">Error</span> Code: 1064. You have an error in your SQL syntax; check the manual that corresponds t...</div>
    <div class="t ms gr" style="left:1038px;top:43px;color:#000">0.000 sec</div>
    <svg style="left:5px;top:67.8px" width="11" height="11"><use href="#i-ok"/></svg>
    <div class="t ms gr" style="left:24px;top:65px;width:29px;text-align:right;color:#000">3</div>
    <div class="t ms gr" style="left:61px;top:65px;color:#000">17:21:32</div>
    <div class="t ms gr" style="letter-spacing:-0.166px;left:112px;top:65px;color:#000">USE dbdacsan</div>
    <div class="t ms gr" style="letter-spacing:-0.231px;left:575px;top:65px;color:#000">0 row(s) affected</div>
    <div class="t ms gr" style="left:1038px;top:65px;color:#000">0.000 sec</div>
    <div style="left:1px;top:85px;width:1146px;height:21px;background:#edf2fb"></div>
    <div style="left:21px;top:84px;width:1px;height:22px;background:#fff"></div>
    <div style="left:57px;top:84px;width:1px;height:22px;background:#fff"></div>
    <div style="left:108px;top:84px;width:1px;height:22px;background:#fff"></div>
    <div style="left:571px;top:84px;width:1px;height:22px;background:#fff"></div>
    <div style="left:1034px;top:84px;width:1px;height:22px;background:#fff"></div>
    <svg style="left:5px;top:89.8px" width="11" height="11"><use href="#i-err"/></svg>
    <div class="t ms gr" style="left:24px;top:87px;width:29px;text-align:right;color:#000">4</div>
    <div class="t ms gr" style="left:61px;top:87px;color:#000">17:21:32</div>
    <div class="t ms gr" style="letter-spacing:-0.132px;left:112px;top:87px;color:#000">CREATE USER 'root'@'localhost' IDENTIFIED BY '123456'</div>
    <div class="t ms gr" style="letter-spacing:-0.145px;left:575px;top:87px;color:#000"><span class="er">Error</span> Code: 1396. Operation CREATE USER failed for 'root'@'localhost'</div>
    <div class="t ms gr" style="left:1038px;top:87px;color:#000">0.000 sec</div>
    <svg style="left:5px;top:111.8px" width="11" height="11"><use href="#i-ok"/></svg>
    <div class="t ms gr" style="left:24px;top:109px;width:29px;text-align:right;color:#000">5</div>
    <div class="t ms gr" style="left:61px;top:109px;color:#000">17:24:33</div>
    <div class="t ms gr" style="letter-spacing:-0.169px;left:112px;top:109px;color:#000">SELECT * FROM dacsan.district LIMIT 0, 1000</div>
    <div class="t ms gr" style="letter-spacing:-0.351px;left:575px;top:109px;color:#000">0 row(s) returned</div>
    <div class="t ms gr" style="letter-spacing:-0.032px;left:1038px;top:109px;color:#000">0.000 sec / 0.000 sec</div>
    <div style="left:1px;top:129px;width:1146px;height:21px;background:#0078d7"></div>
    <div style="left:21px;top:128px;width:1px;height:22px;background:#fff"></div>
    <div style="left:57px;top:128px;width:1px;height:22px;background:#fff"></div>
    <div style="left:108px;top:128px;width:1px;height:22px;background:#fff"></div>
    <div style="left:571px;top:128px;width:1px;height:22px;background:#fff"></div>
    <div style="left:1034px;top:128px;width:1px;height:22px;background:#fff"></div>
    <svg style="left:5px;top:133.8px" width="11" height="11"><use href="#i-err"/></svg>
    <div class="t ms gr" style="left:24px;top:131px;width:29px;text-align:right;color:#fff">6</div>
    <div class="t ms gr" style="left:61px;top:131px;color:#fff">17:24:54</div>
    <div class="t ms gr" style="letter-spacing:-0.149px;left:112px;top:131px;color:#fff">call dacsan.PROC_ADDUPDATE_DISTRICT(1, 'Q9', 'Quận 9', 1)</div>
    <div class="t ms gr" style="letter-spacing:-0.169px;left:575px;top:131px;color:#fff"><span class="er">Error</span> Code: 1449. The user specified as a definer ('webform'@'<span class="pc">%</span>') does not exist</div>
    <div class="t ms gr" style="left:1038px;top:131px;color:#fff">0.000 sec</div>
  </div>
</div>
<!-- annotation -->
<svg class="abs" style="left:0;top:0;pointer-events:none" width="1362" height="654" viewBox="0 0 1362 654">
  <rect x="211.5" y="628.5" width="1104" height="20" rx="1.5" fill="none" stroke="#f5000a" stroke-width="3"/>
  <path d="M1084.8 256.6L694 615.5" stroke="#f5000a" stroke-width="2.8" stroke-linecap="round" fill="none"/>
  <path d="M685.800 623.200L692.600 610L700.200 618.200Z" fill="#f5000a"/>
</svg>
</body></html>
